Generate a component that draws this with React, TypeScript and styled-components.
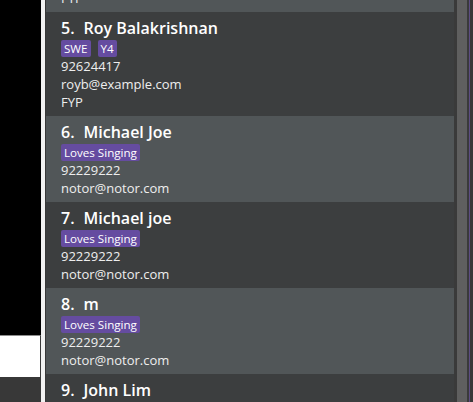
import React from 'react';
import styled, { createGlobalStyle } from 'styled-components';

const GlobalStyle = createGlobalStyle`
  html, body {
    margin: 0;
    padding: 0;
    background: #000;
  }
  body {
    font-family: "Open Sans", "Noto Sans", sans-serif;
  }
`;

const Window = styled.div`
  display: flex;
  width: 473px;
  height: 402px;
  overflow: hidden;
`;

const SidePane = styled.div`
  width: 41px;
  display: flex;
  flex-direction: column;
  background: #383838;
`;

const ResultArea = styled.div`
  height: 335px;
  background: #000;
`;

const CommandBox = styled.div`
  height: 42px;
  box-sizing: border-box;
  background: #fff;
  border-top: 1px solid #8c8c8c;
  border-right: 1px solid #3a3a3a;
`;

const StatusBar = styled.div`
  flex: 1;
  background: #383838;
`;

const Divider = styled.div`
  width: 4px;
  background: #f2f2f2;
`;

const ListPane = styled.div`
  flex: 1;
  display: flex;
  background: #383838;
  padding-left: 1px;
`;

const ListViewport = styled.div`
  width: 408px;
  overflow: hidden;
`;

/* list is scrolled so only the bottom of card 4 shows */
const ScrollContent = styled.div`
  margin-top: -92px;
`;

const ScrollBar = styled.div`
  width: 15px;
  display: flex;
  background: #3a3a3a;
`;

const Thumb = styled.div`
  width: 10px;
  margin-left: 3px;
  background: #5f5f5f;
`;

const Edge = styled.div`
  width: 3px;
  border-left: 1px solid #5c4c82;
  background: #383838;
`;

const Card = styled.div<{ $odd: boolean }>`
  padding: 5px 5px 5px 15px;
  background: ${(p) => (p.$odd ? '#515658' : '#3c3e3f')};
`;

const NameRow = styled.div`
  display: flex;
  font-size: 16px;
  font-weight: 600;
  color: #fff;
  line-height: 22px;
`;

const IdLabel = styled.span`
  margin-right: 9px;
`;

const Tags = styled.div`
  display: flex;
  gap: 7px;
  margin-top: 1px;
`;

const Tag = styled.span`
  font-size: 11.6px;
  line-height: 15px;
  padding: 1px 3px;
  border-radius: 2px;
  color: #fff;
  background: #654ca0;
`;

const Detail = styled.div`
  font-size: 13px;
  line-height: 18px;
  color: #eeeeee;
`;

interface Person {
  id: number;
  name: string;
  tags: string[];
  phone: string;
  email: string;
  note?: string;
}

const people: Person[] = [
  { id: 4, name: 'Alex Yeoh', tags: ['SWE'], phone: '87438807', email: 'alexyeoh@example.com', note: 'FYP' },
  { id: 5, name: 'Roy Balakrishnan', tags: ['SWE', 'Y4'], phone: '92624417', email: 'royb@example.com', note: 'FYP' },
  { id: 6, name: 'Michael Joe', tags: ['Loves Singing'], phone: '92229222', email: 'notor@notor.com' },
  { id: 7, name: 'Michael joe', tags: ['Loves Singing'], phone: '92229222', email: 'notor@notor.com' },
  { id: 8, name: 'm', tags: ['Loves Singing'], phone: '92229222', email: 'notor@notor.com' },
  { id: 9, name: 'John Lim', tags: ['Loves Dancing!'], phone: '92229222', email: 'john@lim.com' },
];

const PersonCard = ({ person }: { person: Person }) => (
  <Card $odd={person.id % 2 === 0}>
    <NameRow>
      <IdLabel>{person.id}.</IdLabel>
      <span>{person.name}</span>
    </NameRow>
    <Tags>
      {person.tags.map((t) => (
        <Tag key={t}>{t}</Tag>
      ))}
    </Tags>
    <Detail>{person.phone}</Detail>
    <Detail>{person.email}</Detail>
    {person.note && <Detail>{person.note}</Detail>}
  </Card>
);

export default function App() {
  return (
    <>
      <GlobalStyle />
      <Window>
        <SidePane>
          <ResultArea />
          <CommandBox />
          <StatusBar />
        </SidePane>
        <Divider />
        <ListPane>
          <ListViewport>
            <ScrollContent>
              {people.map((p) => (
                <PersonCard key={p.id} person={p} />
              ))}
            </ScrollContent>
          </ListViewport>
          <ScrollBar>
            <Thumb />
          </ScrollBar>
          <Edge />
        </ListPane>
      </Window>
    </>
  );
}
